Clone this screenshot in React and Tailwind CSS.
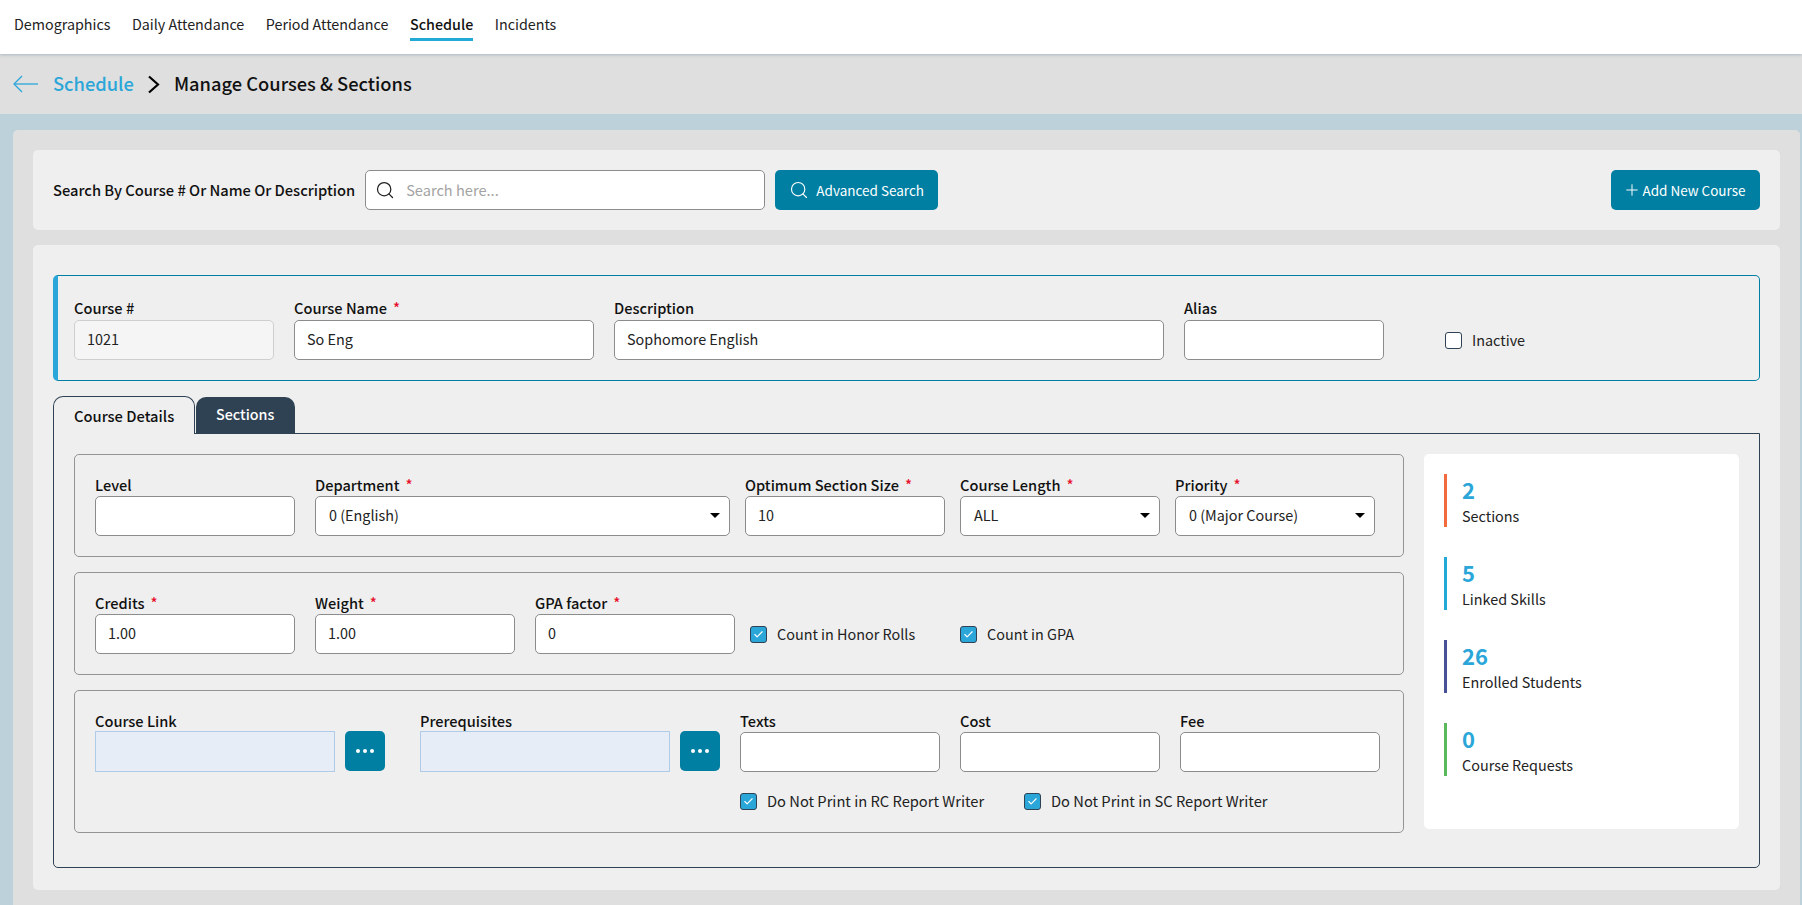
import { Check, Search, Plus } from "lucide-react";

const FONT = "font-['Noto_Sans_CJK_SC','Noto_Sans',sans-serif]";

const NAV = ["Demographics", "Daily Attendance", "Period Attendance", "Schedule", "Incidents"];

const STATS = [
  { value: "2", label: "Sections", bar: "bg-[#f26b3f]" },
  { value: "5", label: "Linked Skills", bar: "bg-[#22a9d6]" },
  { value: "26", label: "Enrolled Students", bar: "bg-[#475296]" },
  { value: "0", label: "Course Requests", bar: "bg-[#5cb85c]" },
];

function Label({ text, required, className = "h-5 mb-px" }) {
  return (
    <div className={`${className} text-[14.6px] leading-5 font-medium text-[#111]`}>
      {text}
      {required && <span className="ml-[6px] text-[#e8112d]">*</span>}
    </div>
  );
}

function Field({ label, required, value = "", width = "w-[200px]", className = "", labelClass }) {
  return (
    <div className={`${width} shrink-0 ${className}`}>
      <Label text={label} required={required} className={labelClass} />
      <input
        readOnly
        value={value}
        className="block w-full h-10 pl-[12px] pr-3 pb-[4px] rounded-[5px] border border-[#8c8c8c] bg-white text-[14.4px] text-[#222] outline-none"
      />
    </div>
  );
}

function SelectField({ label, value, width, className = "" }) {
  return (
    <div className={`${width} shrink-0 ${className}`}>
      <Label text={label} required />
      <div className="flex items-center justify-between h-10 pl-[13px] pr-[9px] pb-[2px] rounded-[5px] border border-[#8c8c8c] bg-white text-[14.4px] text-[#222]">
        <span>{value}</span>
        <span className="w-0 h-0 border-x-[5px] border-x-transparent border-t-[5px] border-t-black" />
      </div>
    </div>
  );
}

function Checkbox({ checked, label, className = "" }) {
  return (
    <label className={`flex items-center gap-[10px] text-[14.4px] text-[#222] ${className}`}>
      <span
        className={`flex items-center justify-center w-[17px] h-[17px] rounded-[3px] border border-[#2f4254] ${
          checked ? "bg-[#2ba6d9]" : "bg-white"
        }`}
      >
        {checked && <Check size={11} strokeWidth={2.5} className="text-white" />}
      </span>
      {label}
    </label>
  );
}

function LinkField({ label, width, className = "" }) {
  return (
    <div className={className}>
      <div className="h-5 text-[14.6px] leading-5 font-medium text-[#111]">{label}</div>
      <div className="flex gap-[10px]">
        <div className={`${width} h-[41px] border border-[#b0cbe8] bg-[#e6edf6]`} />
        <button className="flex items-center justify-center gap-[3px] w-10 h-10 rounded-[5px] bg-[#007fa3]">
          <span className="w-1 h-1 rounded-full bg-white" />
          <span className="w-1 h-1 rounded-full bg-white" />
          <span className="w-1 h-1 rounded-full bg-white" />
        </button>
      </div>
    </div>
  );
}

function Group({ children, className = "" }) {
  return <div className={`border border-[#949494] rounded-[5px] px-5 pt-5 ${className}`}>{children}</div>;
}

export default function App() {
  const topLabel = "h-[21px] mb-px";

  return (
    <div className={`${FONT} h-[905px] overflow-hidden bg-[#bdd1da] text-[#111]`}>
      <nav className="relative z-10 flex items-start gap-[21.5px] h-[54px] pl-[14px] pt-[11px] bg-white shadow-[0_1px_3px_rgba(120,150,170,0.5)] text-[14.3px]">
        {NAV.map((item) =>
          item === "Schedule" ? (
            <span key={item} className="h-[30px] leading-[26px] font-medium border-b-[3px] border-[#22a9d6]">
              {item}
            </span>
          ) : (
            <span key={item} className="leading-[26px] text-[#222]">
              {item}
            </span>
          )
        )}
      </nav>

      <div className="flex items-center h-[60px] pl-[13px] bg-[#dfdfdf]">
        <svg width="25" height="18" viewBox="0 0 25 18" fill="none" stroke="#2ba6d9" strokeWidth="1.3">
          <path d="M25 9H1" />
          <path d="M9 1L1 9l8 8" />
        </svg>
        <span className="ml-[15px] text-[18.3px] font-medium text-[#2ba6d9]">Schedule</span>
        <svg width="13" height="19" viewBox="0 0 13 19" fill="none" stroke="#000" strokeWidth="2.2" className="ml-[13px]">
          <path d="M2 1.5l9 8-9 8" />
        </svg>
        <span className="ml-[14px] text-[18.3px] font-medium text-[#111]">Manage Courses &amp; Sections</span>
      </div>

      <main className="ml-[13px] mr-[2px] mt-4 px-5 pt-5 h-[775px] rounded-t-[5px] bg-[#dfdfdf]">
        <section className="flex items-center h-20 px-5 rounded-[5px] bg-[#efefef]">
          <span className="text-[14.7px] font-medium">Search By Course # Or Name Or Description</span>
          <div className="flex items-center w-[400px] h-10 ml-[10px] pl-[9px] rounded-[5px] border border-[#8c8c8c] bg-white">
            <Search size={20} strokeWidth={1.5} className="text-[#222]" />
            <input
              readOnly
              placeholder="Search here..."
              className="ml-[11px] flex-1 text-[14.6px] outline-none placeholder:text-[#a3a3a3]"
            />
          </div>
          <button className="flex items-center justify-center gap-[7px] w-[163px] h-10 ml-[10px] rounded-[5px] bg-[#007fa3] text-white text-[13.5px]">
            <Search size={20} strokeWidth={1.4} />
            Advanced Search
          </button>
          <button className="flex items-center justify-center gap-px w-[149px] h-10 ml-auto pr-[2px] rounded-[5px] bg-[#007fa3] text-white text-[13.5px]">
            <Plus size={18} strokeWidth={1.3} />
            Add New Course
          </button>
        </section>

        <section className="mt-[15px] h-[645px] px-5 pt-[30px] rounded-[5px] bg-[#efefef]">
          <div className="flex items-start pl-4 pt-[22px] pb-5 rounded-[5px] border border-l-[5px] border-[#007fa3] border-l-[#2ba6d9]">
            <div className="w-[200px] shrink-0">
              <Label text="Course #" className={topLabel} />
              <input
                readOnly
                value="1021"
                className="block w-full h-10 pl-[12px] pb-[4px] rounded-[5px] border border-[#cfcfcf] bg-[#f5f5f5] text-[14.4px] text-[#222] outline-none"
              />
            </div>
            <Field label="Course Name" required value="So Eng" width="w-[300px]" className="ml-5" labelClass={topLabel} />
            <Field label="Description" value="Sophomore English" width="w-[550px]" className="ml-5" labelClass={topLabel} />
            <Field label="Alias" className="ml-5" labelClass={topLabel} />
            <Checkbox label="Inactive" className="ml-[61px] mt-[22px] h-10" />
          </div>

          <div className="relative z-10 flex items-end mt-[15px] h-[38px] -mb-px">
            <div className="w-[142px] h-[38px] pl-5 pt-[9px] rounded-t-[10px] border border-b-0 border-[#2f4254] bg-[#efefef] text-[14.7px] leading-5 font-medium">
              Course Details
            </div>
            <div className="w-[99px] h-[37px] ml-px pl-5 pt-[7px] rounded-t-[10px] bg-[#2f4254] text-white text-[14.3px] leading-5 font-medium">
              Sections
            </div>
          </div>

          <div className="flex items-start gap-5 h-[435px] p-5 rounded-b-[5px] border border-[#2f4254]">
            <div className="w-[1330px] shrink-0 flex flex-col gap-[15px]">
              <Group className="flex items-start pb-5">
                <Field label="Level" />
                <SelectField label="Department" value="0 (English)" width="w-[415px]" className="ml-5" />
                <Field label="Optimum Section Size" required value="10" className="ml-[15px]" />
                <SelectField label="Course Length" value="ALL" width="w-[200px]" className="ml-[15px]" />
                <SelectField label="Priority" value="0 (Major Course)" width="w-[200px]" className="ml-[15px]" />
              </Group>

              <Group className="flex items-start pb-5">
                <Field label="Credits" required value="1.00" />
                <Field label="Weight" required value="1.00" className="ml-5" />
                <Field label="GPA factor" required value="0" className="ml-5" />
                <Checkbox checked label="Count in Honor Rolls" className="ml-[15px] mt-[21px] h-10 w-[195px]" />
                <Checkbox checked label="Count in GPA" className="ml-[15px] mt-[21px] h-10" />
              </Group>

              <Group className="flex items-start h-[143px]">
                <LinkField label="Course Link" width="w-[240px]" />
                <LinkField label="Prerequisites" width="w-[250px]" className="ml-[35px]" />
                <div className="ml-5">
                  <div className="flex gap-5">
                    <Field label="Texts" />
                    <Field label="Cost" />
                    <Field label="Fee" />
                  </div>
                  <div className="flex mt-[18px]">
                    <Checkbox checked label="Do Not Print in RC Report Writer" className="w-[284px] text-[14.7px]" />
                    <Checkbox checked label="Do Not Print in SC Report Writer" className="text-[14.7px]" />
                  </div>
                </div>
              </Group>
            </div>

            <aside className="flex flex-col gap-[30px] w-[315px] h-[375px] pl-5 pt-5 rounded-[5px] bg-white">
              {STATS.map((s) => (
                <div key={s.label} className="flex h-[53px]">
                  <div className={`w-[3px] ${s.bar}`} />
                  <div className="ml-[15px]">
                    <div className="text-[22px] leading-[30px] font-semibold text-[#2ba6d9]">{s.value}</div>
                    <div className="text-[14.4px] leading-[24px] text-[#222]">{s.label}</div>
                  </div>
                </div>
              ))}
            </aside>
          </div>
        </section>
      </main>
    </div>
  );
}
